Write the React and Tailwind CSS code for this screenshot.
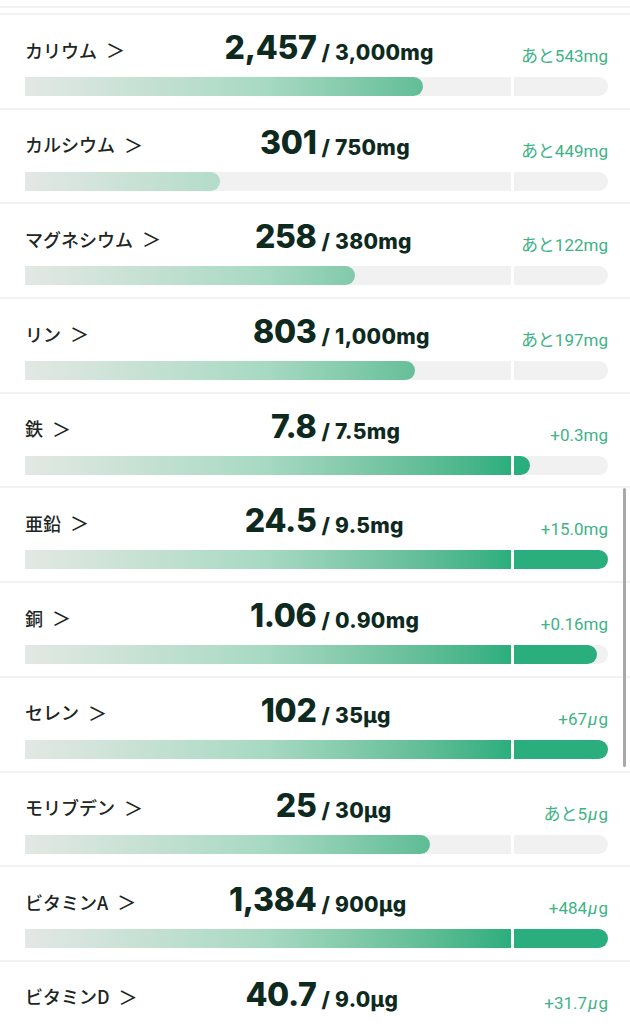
import React from "react";

const BAR_W = 583;

const rows = [
  { name: "カリウム", val: "2,457", target: "3,000mg", label: "あと543mg", r: 2457 / 3000 },
  { name: "カルシウム", val: "301", target: "750mg", label: "あと449mg", r: 301 / 750 },
  { name: "マグネシウム", val: "258", target: "380mg", label: "あと122mg", r: 258 / 380 },
  { name: "リン", val: "803", target: "1,000mg", label: "あと197mg", r: 803 / 1000 },
  { name: "鉄", val: "7.8", target: "7.5mg", label: "+0.3mg", r: 7.8 / 7.5 },
  { name: "亜鉛", val: "24.5", target: "9.5mg", label: "+15.0mg", r: 24.5 / 9.5 },
  { name: "銅", val: "1.06", target: "0.90mg", label: "+0.16mg", r: 1.06 / 0.9 },
  { name: "セレン", val: "102", target: "35μg", label: "+67", mu: true, r: 102 / 35 },
  { name: "モリブデン", val: "25", target: "30μg", label: "あと5", mu: true, r: 25 / 30 },
  { name: "ビタミンA", val: "1,384", target: "900μg", label: "+484", mu: true, r: 1384 / 900 },
  { name: "ビタミンD", val: "40.7", target: "9.0μg", label: "+31.7", mu: true, r: 40.7 / 9 },
];

function Row({ row }) {
  const w = (Math.min(row.r, 1.2) / 1.2) * BAR_W;
  return (
    <div className="h-[94.7px] border-t-2 border-[#f2f2f2] pl-[25px] pr-[22px] flex flex-col">
      <div className="h-[62px] flex items-end shrink-0">
        <div className="w-1/2 flex items-end justify-between">
          <span className="mb-[18px] flex items-center text-[18px] leading-none font-medium text-[#1c2622] font-['Noto_Sans_CJK_JP',sans-serif] whitespace-nowrap">
            {row.name}
            <span className="ml-[9px] text-[19px]">＞</span>
          </span>
          <span className="mb-[13px] text-[32px] leading-none font-extrabold text-[#0e2a1f] font-['Inter','Noto_Sans_CJK_JP',sans-serif] tracking-[-0.3px]">
            {row.val}
          </span>
        </div>
        <div className="w-1/2 flex items-end justify-between">
          <span className="mb-[14px] pl-[5px] text-[21px] leading-none font-extrabold text-[#0e2a1f] font-['Inter','Noto_Sans_CJK_JP',sans-serif] tracking-[0.3px] whitespace-nowrap">
            / {row.target}
          </span>
          <span className="mb-[12px] text-[17px] leading-none text-[#3db386] font-['Roboto','Noto_Sans_CJK_JP',sans-serif] whitespace-nowrap">
            {row.label}
            {row.mu && (
              <>
                <span className="italic mx-[1px]">μ</span>g
              </>
            )}
          </span>
        </div>
      </div>
      <div className="relative h-[19px] w-full shrink-0 rounded-r-full bg-[#f1f1f1]">
        <div
          className="h-full rounded-r-full bg-[#2aae7e] bg-linear-to-r from-[#e3e8e5] via-[#a6d9c2] via-50% to-[#2aae7e] bg-[length:486px_100%] bg-no-repeat"
          style={{ width: `${w}px` }}
        />
        <div className="absolute top-0 left-[486px] h-full w-[3px] bg-white" />
      </div>
    </div>
  );
}

export default function App() {
  return (
    <div className="relative h-[1024px] w-[630px] overflow-hidden bg-white">
      <div className="h-[13px] pt-[6px]">
        <div className="h-[2px] bg-[#f2f2f2]" />
      </div>
      {rows.map((row) => (
        <Row key={row.name} row={row} />
      ))}
      <div className="absolute right-[4px] top-[488px] h-[279px] w-[3px] rounded-full bg-[#a8a8a8]" />
    </div>
  );
}
